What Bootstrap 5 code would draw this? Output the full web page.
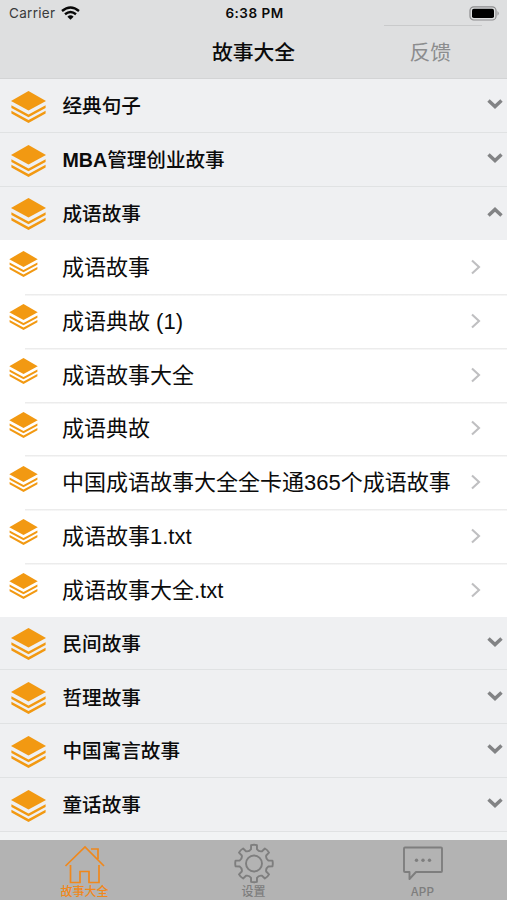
<!DOCTYPE html>
<html lang="zh-CN">
<head>
<meta charset="utf-8">
<meta name="viewport" content="width=device-width, initial-scale=1">
<title>故事大全</title>
<link rel="stylesheet" href="https://cdn.jsdelivr.net/npm/bootstrap@5.3.0/dist/css/bootstrap.min.css">
<style>
  body { font-family: "Liberation Sans", "Noto Sans CJK SC", sans-serif; color: #0b0b0b; }
  .screen { height: 900px; background: #f1f3f4; }
  .topbar { height: 79px; background: #dedfe0; border-bottom: 1px solid #d3d4d5; }
  .status { height: 27px; font: 13.500px/27px Inter, sans-serif; padding: 0 7px 0 9px; }
  .status .carrier { color: #3a3a3b; letter-spacing: .3px; }
  .status .clock { font-weight: 600; letter-spacing: .5px; }
  .thin-rule { width: 98px; height: 1px; background: #c9cacb; right: 25px; top: 25px; }
  .titlebar { height: 51px; }
  .title-text { font-size: 20.8px; font-weight: 500; }
  .feedback { font-size: 20.8px; color: #8c8d8e; margin-right: 56px; }
  .entry { height: 53.75px; }
  .entry-text { line-height: 30px; white-space: nowrap; }
  .group-row { background: #eff0f2; border-bottom: 1.500px solid #e0e2e3; padding: 2px 3px 0 11px; }
  .group-row.open { border-bottom-color: transparent; }
  .group-row .entry-text { font-size: 19.6px; font-weight: 500; margin-left: 16.5px; }
  .group-row .stack { margin-top: 1px; }
  .group-row .chev { margin-top: -4px; }
  .item-row { background: #fff; padding: 0 25px 0 9px; }
  .item-row + .item-row { background: linear-gradient(#ececec, #ececec) 25px 0 / 100% 1.5px no-repeat #fff; }
  .item-row .stack { margin-top: -7px; }
  .item-row .entry-text { font-size: 22px; margin-left: 24px; padding-top: 2px; }
  .tabs { height: 60px; background: #b3b3b3; color: #7e7e7e; font-size: 12px; }
  .tab-label { line-height: 14px; font-weight: 500; font-family: "Noto Sans CJK SC", sans-serif; }
  .tab-on { color: #f0881c; }
</style>
<script src="https://cdn.jsdelivr.net/npm/bootstrap@5.3.0/dist/js/bootstrap.bundle.min.js"></script>
</head>
<body>
<svg width="0" height="0" class="position-absolute" aria-hidden="true">
  <symbol id="stack" viewBox="0 0 35 32">
    <g fill="#f29912"><path d="M17.5 0 35 10 17.5 19.6 0 10Z"/><path d="M.4 14.2 17.5 23.5 34.6 14.2V17L17.5 26.3.4 17Z"/><path d="M.4 19.8 17.5 29 34.6 19.8V22.6L17.5 32 .4 22.6Z"/></g>
  </symbol>
  <symbol id="down" viewBox="0 0 18 12"><path d="M2.5 2.5 9 8.5 15.5 2.5" fill="none" stroke="#828385" stroke-width="3.5"/></symbol>
  <symbol id="up" viewBox="0 0 18 12"><path d="M2.5 9.5 9 3.5 15.5 9.5" fill="none" stroke="#828385" stroke-width="3.5"/></symbol>
  <symbol id="next" viewBox="0 0 12 18"><path d="M2 2.5 9 9 2 15.5" fill="none" stroke="#bfbfc1" stroke-width="2.1"/></symbol>
</svg>
<div class="screen d-flex flex-column overflow-hidden">
  <header class="topbar flex-shrink-0 position-relative">
    <div class="status row g-0">
      <div class="col d-flex align-items-center"><span class="carrier">Carrier</span>
        <svg style="margin:-2px 0 0 6px" width="19" height="14" viewBox="0 0 19 14"><g fill="none" stroke="#080808" stroke-width="2.4"><path d="M1 5Q9.500-2 18 5"/><path d="M4 8.200Q9.500 3.700 15 8.200"/></g><path d="M9.500 13.800 6.400 10.700Q9.500 8 12.600 10.700Z" fill="#080808"/></svg>
      </div>
      <div class="col-auto clock">6:38 PM</div>
      <div class="col d-flex align-items-center justify-content-end">
        <svg width="31" height="15" viewBox="0 0 31 15"><rect x="1" y=".8" width="26" height="13.2" rx="3.8" fill="#dedfe0" stroke="#8c8c8d" stroke-width="1.2"/><rect x="3" y="2.8" width="22" height="9.2" rx="1.8"/><path d="M28.500 5Q31 7.400 28.500 9.800Z" fill="#909091"/></svg>
      </div>
    </div>
    <div class="thin-rule position-absolute"></div>
    <div class="titlebar row g-0 align-items-center">
      <div class="col"></div><div class="col-auto title-text">故事大全</div><div class="col text-end"><span class="feedback">反馈</span></div>
    </div>
  </header>
  <main id="list" class="flex-grow-1 overflow-hidden"></main>
  <footer class="tabs row g-0 flex-shrink-0 text-center">
    <div class="col tab-on">
      <svg class="d-block mx-auto" width="42" height="44" viewBox="0 0 42 44" fill="none" stroke="currentColor" stroke-width="1.7"><path d="M1.500 26 21 7 40 26M27 9H34V19M6.500 25V42.500H16V31.500H25V42.500H35V25"/></svg>
      <div class="tab-label">故事大全</div>
    </div>
    <div class="col">
      <svg class="d-block mx-auto" width="42" height="44" viewBox="0 0 42 44" fill="none" stroke="currentColor" stroke-width="1.9" stroke-linejoin="round"><path id="gear"/><circle cx="21" cy="23.5" r="8"/></svg>
      <div class="tab-label">设置</div>
    </div>
    <div class="col">
      <svg class="d-block mx-auto" width="42" height="44" viewBox="0 0 42 44" fill="none" stroke="currentColor" stroke-width="1.9" stroke-linejoin="round"><path d="M3 7.500H39Q40 7.500 40 8.500V31Q40 32 39 32H14L7.500 39V32H3Q2 32 2 31V8.500Q2 7.500 3 7.500Z"/><g fill="currentColor" stroke="none"><circle cx="14.500" cy="20.200" r="1.700"/><circle cx="21" cy="20.200" r="1.700"/><circle cx="27.500" cy="20.200" r="1.700"/></g></svg>
      <div class="tab-label">APP</div>
    </div>
  </footer>
</div>
<script>
  const groups = [
    ["经典句子"], ["MBA管理创业故事"],
    ["成语故事", ["成语故事", "成语典故 (1)", "成语故事大全", "成语典故", "中国成语故事大全全卡通365个成语故事", "成语故事1.txt", "成语故事大全.txt"]],
    ["民间故事"], ["哲理故事"], ["中国寓言故事"], ["童话故事"]
  ];
  const icon = (id, w, h, cls) => `<svg class="${cls} flex-shrink-0" width="${w}" height="${h}"><use href="#${id}"/></svg>`;
  // Latin letters in a group name are set bold, beside medium-weight Chinese
  const label = name => name.replace(/[A-Za-z]+/g, "<b>$&</b>");
  document.getElementById("list").innerHTML = groups.map(([name, items]) => `
    <section><div class="entry group-row d-flex align-items-center ${items ? "open" : ""}">
      ${icon("stack", 35, 32, "stack")}<span class="entry-text">${label(name)}</span>${icon(items ? "up" : "down", 18, 12, "chev ms-auto")}</div>
      ${items ? `<div>${items.map(t => `<div class="entry item-row d-flex align-items-center">${icon("stack", 29, 26, "stack")}<span class="entry-text">${t}</span>${icon("next", 12, 18, "ms-auto")}</div>`).join("")}</div>` : ""}
    </section>`).join("");

  // Eight-toothed gear outline with rounded valleys
  let d = "";
  for (let i = 0; i < 8; i++) {
    const p = (r, a) => { const t = (i * 45 + a - 90) * Math.PI / 180; return (21 + r * Math.cos(t)).toFixed(1) + " " + (23.5 + r * Math.sin(t)).toFixed(1); };
    d += `${i ? "L" : "M"}${p(14.6, -12)}L${p(18.6, -9)}Q${p(19.2, 0)} ${p(18.6, 9)}L${p(14.6, 12)}Q${p(12.6, 22.5)} ${p(14.6, 33)}`;
  }
  document.getElementById("gear").setAttribute("d", d + "Z");
</script>
</body>
</html>
